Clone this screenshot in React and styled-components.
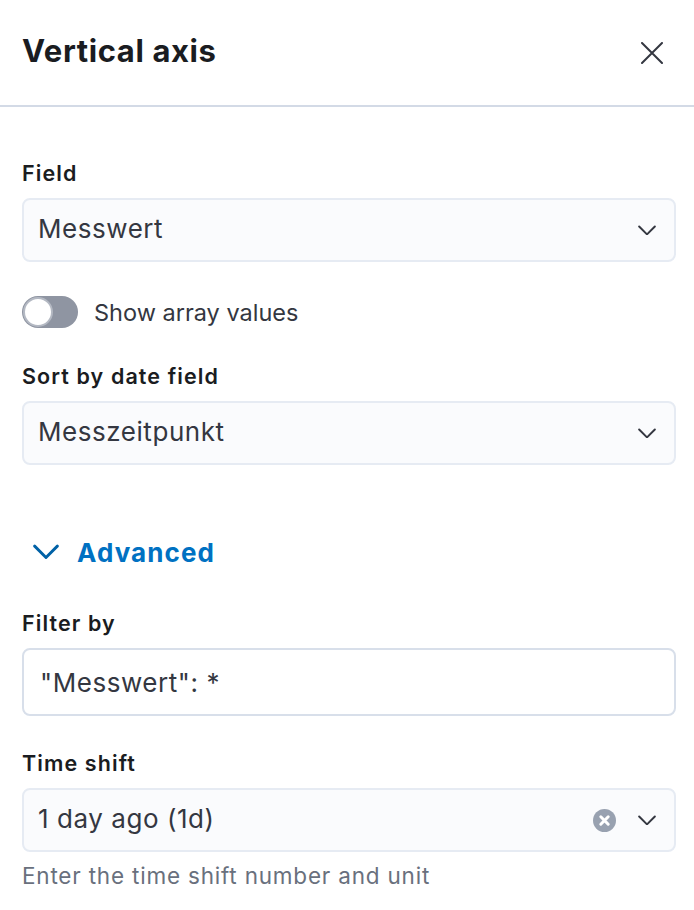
import React from "react";
import styled, { createGlobalStyle } from "styled-components";

const GlobalStyle = createGlobalStyle`
  body {
    margin: 0;
    background: #fff;
    font-family: Inter, "Noto Sans", sans-serif;
    color: #1a1c21;
  }
`;

const Panel = styled.div`
  width: 694px;
  min-height: 910px;
  background: #fff;
`;

const Header = styled.div`
  display: flex;
  align-items: center;
  justify-content: space-between;
  height: 107px;
  padding: 0 30px 0 22px;
  border-bottom: 2px solid #d3dae6;
  box-sizing: border-box;
`;

const Title = styled.h2`
  margin: 0 0 5px;
  font-size: 31px;
  font-weight: 700;
  letter-spacing: 0.6px;
  color: #1a1c21;
`;

const CloseButton = styled.button`
  display: flex;
  align-items: center;
  justify-content: center;
  border: none;
  background: none;
  padding: 0;
  width: 24px;
  height: 24px;
  cursor: pointer;
`;

const Body = styled.div`
  display: flex;
  flex-direction: column;
  padding: 53px 18px 0 22px;
`;

const Label = styled.label`
  display: block;
  font-size: 21.5px;
  line-height: 26px;
  font-weight: 600;
  letter-spacing: 1.1px;
  color: #1a1c21;
  margin-top: ${(p) => p.$top || 0}px;
  margin-bottom: 12px;
`;

const SelectBox = styled.div`
  display: flex;
  align-items: center;
  height: ${(p) => (p.$tall ? 68 : 64)}px;
  box-sizing: border-box;
  padding: 0 18px 0 ${(p) => (p.$white ? 16 : 14)}px;
  background: ${(p) => (p.$white ? "#fff" : "#fafbfd")};
  border: 2px solid ${(p) => (p.$white ? "#d8dfea" : "#e6ebf3")};
  border-radius: 8px;
  font-size: 26px;
  letter-spacing: 0.55px;
  color: #343741;
`;

const Value = styled.span`
  flex: 1;
  white-space: nowrap;
  padding-bottom: ${(p) => (p.$raised ? 4 : 0)}px;
`;

const Icons = styled.span`
  display: flex;
  align-items: center;
  gap: 22px;
`;

const ToggleRow = styled.div`
  display: flex;
  align-items: center;
  gap: 16px;
  margin-top: 34px;
  font-size: 23.5px;
  color: #343741;
`;

const Track = styled.span`
  position: relative;
  display: inline-block;
  width: 56px;
  height: 32px;
  border-radius: 16px;
  background: #8f95a2;
`;

const Knob = styled.span`
  position: absolute;
  left: 1px;
  top: 1px;
  width: 30px;
  height: 30px;
  box-sizing: border-box;
  border-radius: 50%;
  background: #fff;
  border: 2px solid #b4b9c3;
`;

const Advanced = styled.button`
  display: flex;
  align-items: center;
  gap: 18px;
  margin-top: 67px;
  margin-left: 11px;
  padding: 0;
  height: 40px;
  border: none;
  background: none;
  font-family: inherit;
  font-size: 26px;
  font-weight: 700;
  letter-spacing: 1.1px;
  color: #0071c2;
  cursor: pointer;
`;

const HelpText = styled.div`
  margin-top: 11px;
  font-size: 22.5px;
  line-height: 26px;
  letter-spacing: 0.8px;
  color: #69707d;
`;

const Chevron = ({ color = "#343741", width = 18, stroke = 2 }) => (
  <svg width={width} height={width * 0.6} viewBox="0 0 18 11" fill="none">
    <path d="M1 1.5l8 8 8-8" stroke={color} strokeWidth={stroke} strokeLinecap="round" strokeLinejoin="round" />
  </svg>
);

const ClearIcon = () => (
  <svg width="23" height="23" viewBox="0 0 23 23">
    <circle cx="11.5" cy="11.5" r="11.5" fill="#98a1b0" />
    <path d="M7.8 7.8l7.4 7.4M15.2 7.8l-7.4 7.4" stroke="#fff" strokeWidth="3" strokeLinecap="round" />
  </svg>
);

const CloseIcon = () => (
  <svg width="22" height="22" viewBox="0 0 22 22">
    <path d="M1 1l20 20M21 1L1 21" stroke="#343741" strokeWidth="2" strokeLinecap="round" />
  </svg>
);

export default function App() {
  return (
    <Panel>
      <GlobalStyle />
      <Header>
        <Title>Vertical axis</Title>
        <CloseButton aria-label="Close">
          <CloseIcon />
        </CloseButton>
      </Header>
      <Body>
        <Label>Field</Label>
        <SelectBox>
          <Value $raised>Messwert</Value>
          <Chevron />
        </SelectBox>

        <ToggleRow>
          <Track>
            <Knob />
          </Track>
          Show array values
        </ToggleRow>

        <Label $top={35}>Sort by date field</Label>
        <SelectBox>
          <Value $raised>Messzeitpunkt</Value>
          <Chevron />
        </SelectBox>

        <Advanced>
          <Chevron color="#0061a6" width={26} stroke={2} />
          Advanced
        </Advanced>

        <Label $top={38}>Filter by</Label>
        <SelectBox $white $tall>
          <Value>"Messwert": *</Value>
        </SelectBox>

        <Label $top={34}>Time shift</Label>
        <SelectBox>
          <Value $raised>1 day ago (1d)</Value>
          <Icons>
            <ClearIcon />
            <Chevron />
          </Icons>
        </SelectBox>
        <HelpText>Enter the time shift number and unit</HelpText>
      </Body>
    </Panel>
  );
}
